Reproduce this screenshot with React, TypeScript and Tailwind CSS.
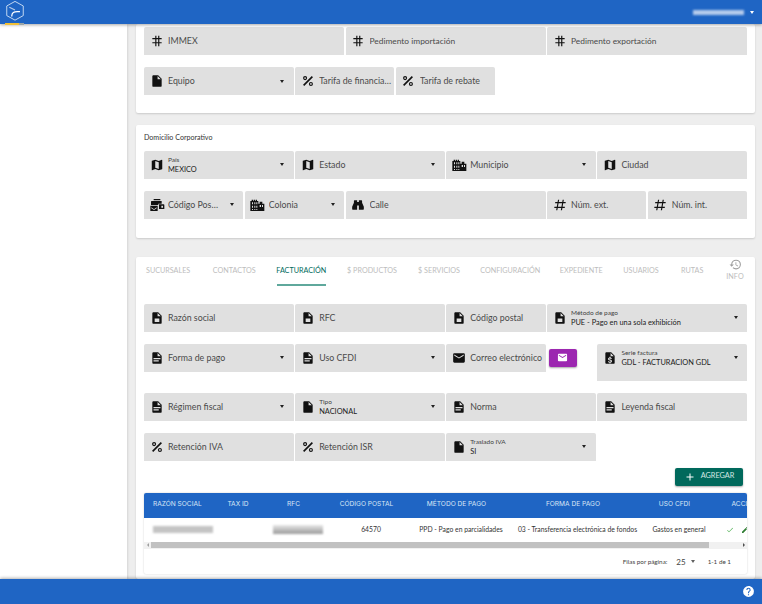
import React from "react";

const P = {
  pound: "M5.41,21L6.12,17H2.12L2.47,15H6.47L7.53,9H3.53L3.88,7H7.88L8.59,3H10.59L9.88,7H15.88L16.59,3H18.59L17.88,7H21.88L21.53,9H17.53L16.47,15H20.47L20.12,17H16.12L15.41,21H13.41L14.12,17H8.12L7.41,21H5.41M9.53,9L8.47,15H14.47L15.53,9H9.53Z",
  hash: "M9,3H11V7H14V3H16V7H20V9H16V14H20V16H16V21H14V16H11V21H9V16H4V14H9V9H4V7H9V3M11,9V14H14V9H11Z",
  file: "M13,9V3.5L18.5,9M6,2C4.89,2 4,2.89 4,4V20A2,2 0 0,0 6,22H18A2,2 0 0,0 20,20V8L14,2H6Z",
  doc: "M13,9H18.5L13,3.5V9M6,2H14L20,8V20A2,2 0 0,1 18,22H6C4.89,22 4,21.1 4,20V4C4,2.89 4.89,2 6,2M15,18V16H6V18H15M18,14V12H6V14H18Z",
  box: "M13,9H18.5L13,3.5V9M6,2H14L20,8V20A2,2 0 0,1 18,22H6C4.89,22 4,21.1 4,20V4C4,2.89 4.89,2 6,2M8,13V19H16V13H8Z",
  percent: "M18.5,3.5L3.5,18.5L5.5,20.5L20.5,5.5M7,3.5A3.5,3.5 0 0,0 3.5,7A3.5,3.5 0 0,0 7,10.5A3.5,3.5 0 0,0 10.5,7A3.5,3.5 0 0,0 7,3.5M7,5.5A1.5,1.5 0 0,1 8.5,7A1.5,1.5 0 0,1 7,8.5A1.5,1.5 0 0,1 5.5,7A1.5,1.5 0 0,1 7,5.5M17,13.5A3.5,3.5 0 0,0 13.5,17A3.5,3.5 0 0,0 17,20.5A3.5,3.5 0 0,0 20.5,17A3.5,3.5 0 0,0 17,13.5M17,15.5A1.5,1.5 0 0,1 18.5,17A1.5,1.5 0 0,1 17,18.5A1.5,1.5 0 0,1 15.5,17A1.5,1.5 0 0,1 17,15.5Z",
  map: "M15,19L9,16.89V5L15,7.11M20.5,3C20.44,3 20.39,3 20.34,3L15,5.1L9,3L3.36,4.9C3.15,4.97 3,5.15 3,5.38V20.5A0.5,0.5 0 0,0 3.5,21C3.55,21 3.61,21 3.66,20.97L9,18.9L15,21L20.64,19.1C20.85,19 21,18.85 21,18.62V3.5A0.5,0.5 0 0,0 20.5,3Z",
  city: "M2,21V6H4V4H6V6H7V4H9V6H10V4H12V6H14V10H16V7H20V10H23V21H2M4.5,8V11H6V8H4.5M8,8V11H9.5V8H8M11,8V11H12.5V8H11M4.5,13V16H6V13H4.5M8,13V16H9.5V13H8M11,13V16H12.5V13H11M16,12V15H18V12H16M19.5,12V15H21V12H19.5M4.5,18V19.5H6V18H4.5M8,18V19.5H9.5V18H8M11,18V19.5H12.5V18H11Z",
  binoculars: "M6,4H10.5V20H3A1,1 0 0,1 2,19V15L5,8V5A1,1 0 0,1 6,4ZM13.5,4H18A1,1 0 0,1 19,5V8L22,15V19A1,1 0 0,1 21,20H13.5V4ZM10.5,7H13.5V13H10.5Z",
  post: "M7,3H17V5H7V3M4,6H19V10H14V12H3V7A1,1 0 0,1 4,6M15,11H22A1,1 0 0,1 23,12V18H15V11M18.5,13V16H21V13H18.5M2,13H13V21H2V13M3.5,15.5V16.7L7.5,19.5L11.5,16.7V15.5L7.5,18.2L3.5,15.5Z",
  email: "M20,8L12,13L4,8V6L12,11L20,6M20,4H4C2.89,4 2,4.89 2,6V18A2,2 0 0,0 4,20H20A2,2 0 0,0 22,18V6C22,4.89 21.1,4 20,4Z",
  history: "M13.5,8H12V13L16.28,15.54L17,14.33L13.5,12.25V8M13,3A9,9 0 0,0 4,12H1L4.96,16.03L9,12H6A7,7 0 0,1 13,5A7,7 0 0,1 20,12A7,7 0 0,1 13,19C11.07,19 9.32,18.21 8.06,16.94L6.64,18.36C8.27,20 10.5,21 13,21A9,9 0 0,0 22,12A9,9 0 0,0 13,3",
  help: "M15.07,11.25L14.17,12.17C13.45,12.89 13,13.5 13,15H11V14.5C11,13.39 11.45,12.39 12.17,11.67L13.41,10.41C13.78,10.05 14,9.55 14,9C14,7.89 13.1,7 12,7A2,2 0 0,0 10,9H8A4,4 0 0,1 12,5A4,4 0 0,1 16,9C16,9.88 15.64,10.67 15.07,11.25M13,19H11V17H13M12,2A10,10 0 0,0 2,12A10,10 0 0,0 12,22A10,10 0 0,0 22,12C22,6.47 17.5,2 12,2Z",
  check: "M21,7L9,19L3.5,13.5L4.91,12.09L9,16.17L19.59,5.59L21,7Z",
  pencil: "M20.71,7.04C21.1,6.65 21.1,6 20.71,5.63L18.37,3.29C18,2.9 17.35,2.9 16.96,3.29L15.12,5.12L18.87,8.87M3,17.25V21H6.75L17.81,9.93L14.06,6.18L3,17.25Z",
  plus: "M19,13H13V19H11V13H5V11H11V5H13V11H19V13Z",
  dollar: "M6,2H14L20,8V20A2,2 0 0,1 18,22H6C4.89,22 4,21.1 4,20V4C4,2.89 4.89,2 6,2M13,9H18.5L13,3.5V9M11,10V11.2C9.6,11.5 8.6,12.4 8.6,13.7C8.6,15.2 9.8,15.9 11.6,16.4C13,16.8 13.4,17.1 13.4,17.6C13.4,18.1 12.8,18.4 12,18.4C11,18.4 10.5,18 10.4,17.4H8.5C8.6,18.7 9.6,19.5 11,19.8V21H13V19.8C14.4,19.5 15.4,18.7 15.4,17.4C15.4,15.8 14,15.2 12.4,14.7C11,14.3 10.6,14 10.6,13.6C10.6,13.1 11.1,12.8 11.9,12.8C12.7,12.8 13.1,13.2 13.2,13.7H15.1C15,12.5 14.2,11.5 13,11.2V10H11Z",
};

function Icon({ d, className = "w-[14px] h-[14px] text-[#111111]" }: { d: string; className?: string }) {
  return (
    <svg viewBox="0 0 24 24" className={`${className} shrink-0`} fill="currentColor" fillRule="evenodd">
      <path d={d} />
    </svg>
  );
}

function Caret({ className = "border-t-[#212121]" }: { className?: string }) {
  return <span className={`w-0 h-0 border-x-[2.5px] border-x-transparent border-t-[3px] shrink-0 ${className}`} />;
}

type FieldProps = {
  icon: string;
  label: string;
  value?: string;
  select?: boolean;
  span: string;
  tall?: boolean;
  wide?: boolean;
  narrow?: boolean;
  clip?: boolean;
};

function Field({ icon, label, value, select, span, tall, wide, narrow, clip }: FieldProps) {
  return (
    <div className={`${span} ${tall ? "h-[37px] pb-[9px]" : "h-[28px]"} bg-[#e0e0e0] rounded-t-[2px] flex items-center pl-[5.5px] ${select ? "pr-[9.5px]" : "pr-[1px]"} min-w-0`}>
      <Icon d={icon} className={wide ? "w-[16px] h-[16px] -mx-[1px] text-[#111111]" : "w-[14px] h-[14px] text-[#111111]"} />
      <div className={`ml-[4.5px] flex-1 min-w-0 ${select ? "pr-[5px]" : ""}`}>
        {value ? (
          <div className="flex flex-col">
            <span className="text-[6.5px] leading-[9px] text-[#424242] whitespace-nowrap">{label}</span>
            <span className="text-[7.4px] leading-[11px] text-[#212121] whitespace-nowrap">{value}</span>
          </div>
        ) : (
          <div className={`${narrow ? "text-[8.4px]" : "text-[8.8px]"} ${clip ? "max-w-[51px]" : ""} leading-[12px] text-[#4a4a4a] truncate`}>{label}</div>
        )}
      </div>
      {select && <Caret />}
    </div>
  );
}

function Card({ children, className }: { children: React.ReactNode; className: string }) {
  return <section className={`bg-white rounded-[2px] shadow-[0_1px_2px_rgba(0,0,0,0.15)] px-[8px] ${className}`}>{children}</section>;
}

const tabs: [string, string][] = [
  ["SUCURSALES", "w-[66.5px]"],
  ["CONTACTOS", "w-[63.5px]"],
  ["FACTURACIÓN", "w-[70.5px]"],
  ["$ PRODUCTOS", "w-[71px]"],
  ["$ SERVICIOS", "w-[63px]"],
  ["CONFIGURACIÓN", "w-[79.5px]"],
  ["EXPEDIENTE", "w-[62.5px]"],
  ["USUARIOS", "w-[57px]"],
  ["RUTAS", "w-[45.5px]"],
];

const columns: [string, string][] = [
  ["RAZÓN SOCIAL", "w-[78px]"],
  ["TAX ID", "w-[41px]"],
  ["RFC", "w-[70px]"],
  ["CÓDIGO POSTAL", "w-[76px]"],
  ["MÉTODO DE PAGO", "w-[104px]"],
  ["FORMA DE PAGO", "w-[129px]"],
  ["USO CFDI", "w-[74px]"],
  ["ACCIONES", "w-[74px]"],
];

export default function App() {
  return (
    <div className="h-screen w-full flex flex-col overflow-hidden [font-family:Lato,sans-serif] bg-[#eeeeee]">
      <header className="relative z-10 h-[24px] shrink-0 bg-[#1f65c4] shadow-[0_1px_3px_rgba(0,0,0,0.35)] flex items-center justify-between pr-[8px]">
        <div className="relative w-[26px] h-[24px] ml-[3px]">
          <svg viewBox="0 0 24 24" className="absolute left-[1px] top-[0px] w-[22px] h-[22px]" fill="none" stroke="#cfe0f5" strokeWidth="1">
            <path d="M12 1.5L21 6.5V17L12 22L3 17V6.5Z" />
            <path d="M5.8 8L12 10.9" stroke="#b7cdea" strokeWidth="1.2" />
            <path d="M8.4 18C8.5 14 10 12 17.4 12.8" stroke="#ffffff" strokeWidth="1.4" />
          </svg>
          <div className="absolute left-[1.5px] -bottom-[1px] flex h-[2px] w-[19.5px]">
            <span className="w-[14px] bg-[#f2c037]" />
            <span className="w-[5.5px] bg-[#9aa5a8]" />
          </div>
        </div>
        <div className="flex items-center gap-[6px]">
          <div className="w-[51px] h-[5px] bg-[#b4cbec] blur-[1px]" />
          <Caret className="border-t-white" />
        </div>
      </header>

      <div className="flex-1 min-h-0 flex">
        <aside className="w-[127px] shrink-0 bg-white shadow-[0_1px_3px_rgba(0,0,0,0.2)]" />
        <main className="flex-1 min-w-0 pl-[9px] pr-[7px] overflow-hidden flex flex-col">
          <Card className="pt-[3px] pb-[17.5px] shrink-0">
            <div className="grid grid-cols-12 gap-x-[1.5px] gap-y-[12px]">
              <Field span="col-span-4" icon={P.hash} label="IMMEX" />
              <Field span="col-span-4" narrow icon={P.hash} label="Pedimento importación" />
              <Field span="col-span-4" narrow icon={P.hash} label="Pedimento exportación" />
              <Field span="col-span-3" icon={P.file} label="Equipo" select />
              <Field span="col-span-2" icon={P.percent} label="Tarifa de financiamiento" />
              <Field span="col-span-2" icon={P.percent} label="Tarifa de rebate" />
            </div>
          </Card>

          <Card className="mt-[12px] pt-[8px] pb-[19px] shrink-0">
            <h3 className="text-[7.1px] leading-[10px] text-[#333333] font-normal mb-[8px]">Domicilio Corporativo</h3>
            <div className="grid grid-cols-12 gap-x-[1.5px] gap-y-[12px]">
              <Field span="col-span-3" icon={P.map} label="País" value="MEXICO" select />
              <Field span="col-span-3" icon={P.map} label="Estado" select />
              <Field span="col-span-3" wide icon={P.city} label="Municipio" select />
              <Field span="col-span-3" icon={P.map} label="Ciudad" />
              <Field span="col-span-2" wide clip icon={P.post} label="Código Postal" select />
              <Field span="col-span-2" wide icon={P.city} label="Colonia" select />
              <Field span="col-span-4" icon={P.binoculars} label="Calle" />
              <Field span="col-span-2" icon={P.pound} label="Núm. ext." />
              <Field span="col-span-2" icon={P.pound} label="Núm. int." />
            </div>
          </Card>

          <Card className="mt-[19px] flex-1 min-h-0">
            <nav className="h-[29px] flex items-stretch -mx-[8px] text-[7.2px] text-[#bdbdbd]">
              {tabs.map(([t, w]) => (
                <div key={t} className={`${w} shrink-0 ${t === "SUCURSALES" ? "pl-[10px]" : "justify-center"} flex items-center relative whitespace-nowrap ${t === "FACTURACIÓN" ? "text-[#00695c]" : ""}`}>
                  <span>{t}</span>
                  {t === "FACTURACIÓN" && <span className="absolute left-[10.5px] right-[10.5px] bottom-0 h-[1.5px] bg-[#5fa89c]" />}
                </div>
              ))}
              <div className="w-[40px] shrink-0 flex flex-col items-center pt-[1px]">
                <Icon d={P.history} className="w-[13px] h-[13px] text-[#9e9e9e]" />
                <span className="leading-[10px] mt-[1px]">INFO</span>
              </div>
            </nav>

            <div className="mt-[18px] grid grid-cols-12 gap-x-[1.5px] gap-y-[12px] items-start">
              <Field span="col-span-3" icon={P.box} label="Razón social" />
              <Field span="col-span-3" icon={P.box} label="RFC" />
              <Field span="col-span-2" icon={P.box} label="Código postal" />
              <Field span="col-span-4" icon={P.box} label="Método de pago" value="PUE - Pago en una sola exhibición" select />
              <Field span="col-span-3" icon={P.doc} label="Forma de pago" select />
              <Field span="col-span-3" icon={P.doc} label="Uso CFDI" select />
              <Field span="col-span-2" icon={P.email} label="Correo electrónico" />
              <div className="col-span-1 pt-[5px] pl-[1.5px]">
                <button className="w-[28px] h-[18px] bg-[#9c27b0] rounded-[2px] shadow-[0_1px_2px_rgba(0,0,0,0.35)] flex items-center justify-center">
                  <Icon d={P.email} className="w-[11px] h-[11px] text-white" />
                </button>
              </div>
              <Field span="col-span-3" tall icon={P.dollar} label="Serie factura" value="GDL - FACTURACION GDL" select />
              <Field span="col-span-3" icon={P.doc} label="Régimen fiscal" select />
              <Field span="col-span-3" icon={P.file} label="Tipo" value="NACIONAL" select />
              <Field span="col-span-3" icon={P.doc} label="Norma" />
              <Field span="col-span-3" icon={P.doc} label="Leyenda fiscal" />
              <Field span="col-span-3" icon={P.percent} label="Retención IVA" />
              <Field span="col-span-3" icon={P.percent} label="Retención ISR" />
              <Field span="col-span-3" icon={P.file} label="Traslado IVA" value="SI" select />
            </div>

            <div className="mt-[7px] flex justify-end pr-[4px]">
              <button className="w-[68px] h-[18px] bg-[#00695c] rounded-[2px] shadow-[0_1px_2px_rgba(0,0,0,0.35)] flex items-center justify-center gap-[5px] text-[7.3px] text-[#d5e8e5]">
                <Icon d={P.plus} className="w-[12px] h-[12px] text-white" />
                AGREGAR
              </button>
            </div>

            <div className="mt-[7px] rounded-[2px] overflow-hidden shadow-[0_0_2px_rgba(0,0,0,0.2)] h-[81px]">
              <table className="table-fixed w-[646px] border-collapse">
                <colgroup>
                  {columns.map(([c, w]) => (
                    <col key={c} className={w} />
                  ))}
                </colgroup>
                <thead>
                  <tr className="h-[25px] bg-[#1f65c4] text-[6.6px] text-[#dbe7f6] font-normal">
                    {columns.map(([c], i) => (
                      <th key={c} className={`font-normal whitespace-nowrap [font-family:Inter,sans-serif] ${i === 0 ? "text-left pl-[9px]" : "text-center pr-[9px]"}`}>
                        {c}
                      </th>
                    ))}
                  </tr>
                </thead>
                <tbody>
                  <tr className="h-[24px] text-[6.8px] text-[#333333] text-center">
                    <td className="pl-[9px]">
                      <div className="w-[60px] h-[7px] bg-[#c4c4c4] blur-[1px]" />
                    </td>
                    <td />
                    <td>
                      <div className="mx-auto w-[50px] h-[9px] bg-gradient-to-b from-[#e8e8e8] to-[#9a9a9a] blur-[0.8px]" />
                    </td>
                    <td>64570</td>
                    <td className="whitespace-nowrap">PPD - Pago en parcialidades</td>
                    <td className="whitespace-nowrap">03 - Transferencia electrónica de fondos</td>
                    <td className="whitespace-nowrap">Gastos en general</td>
                    <td>
                      <div className="flex items-center pl-[10px] gap-[7px]">
                        <Icon d={P.check} className="w-[8px] h-[8px] text-[#4caf50]" />
                        <Icon d={P.pencil} className="w-[8px] h-[8px] text-[#2e7d32]" />
                      </div>
                    </td>
                  </tr>
                </tbody>
              </table>
              <div className="h-[7px] bg-[#f1f1f1] flex items-center">
                <span className="w-[7px] flex justify-center">
                  <span className="w-0 h-0 border-y-[2px] border-y-transparent border-r-[2.5px] border-r-[#9e9e9e]" />
                </span>
                <span className="w-[558px] h-[6px] bg-[#c1c1c1]" />
                <span className="flex-1 flex justify-end pr-[2.5px]">
                  <span className="w-0 h-0 border-y-[2px] border-y-transparent border-l-[2.5px] border-l-[#505050]" />
                </span>
              </div>
              <div className="h-[25px] pt-[1px] flex items-center justify-end pr-[16px] text-[6.3px] text-[#424242]">
                <span>Filas por página:</span>
                <span className="ml-[9px] text-[8px]">25</span>
                <Caret className="ml-[5px] border-t-[#616161]" />
                <span className="ml-[13px]">1-1 de 1</span>
              </div>
            </div>
          </Card>
        </main>
      </div>

      <footer className="relative z-10 h-[25px] shrink-0 bg-[#1f65c4] shadow-[0_-1px_3px_rgba(0,0,0,0.3)] flex items-center justify-end pr-[7px]">
        <Icon d={P.help} className="w-[13px] h-[13px] text-white" />
      </footer>
    </div>
  );
}
